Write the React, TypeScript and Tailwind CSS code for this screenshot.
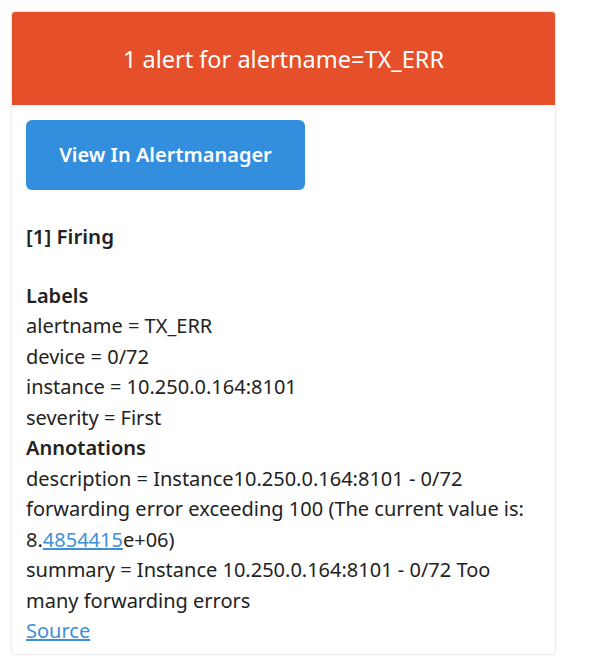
import React from "react";

export default function App() {
  const font = { fontFamily: '"Noto Sans", "Open Sans", sans-serif' };
  return (
    <div className="w-[592px] h-[669px] bg-white pt-[11px] pl-[11px]" style={font}>
      <div className="w-[545px] h-[644px] rounded-[4px] border border-[#ececec] bg-white overflow-hidden shadow-[0_0_2px_rgba(0,0,0,0.06)]">
        <div className="h-[93px] bg-[#e5502b] flex items-center justify-center text-white text-[23.5px] pt-[3px]">
          1 alert for alertname=TX_ERR
        </div>
        <div className="px-[14px] pt-[15px] text-[20px] text-[#222] leading-[30.5px]">
          <div className="w-[279px] h-[70px] rounded-[6px] bg-[#348ede] flex items-center justify-center text-white font-semibold text-[20px]">
            View In Alertmanager
          </div>
          <div className="mt-[31px] font-semibold text-[20.5px]">[1] Firing</div>
          <div className="mt-[29px] font-semibold">Labels</div>
          <div>alertname = TX_ERR</div>
          <div>device = 0/72</div>
          <div>instance = 10.250.0.164:8101</div>
          <div>severity = First</div>
          <div className="font-semibold">Annotations</div>
          <div className="w-[515px]">
            description = Instance10.250.0.164:8101 - 0/72 forwarding error exceeding 100 (The current value is: 8.
            <span className="text-[#3d8fd6] underline">4854415</span>e+06)
          </div>
          <div className="w-[515px]">summary = Instance 10.250.0.164:8101 - 0/72 Too many forwarding errors</div>
          <div>
            <span className="text-[#3d8fd6] underline">Source</span>
          </div>
        </div>
      </div>
    </div>
  );
}
